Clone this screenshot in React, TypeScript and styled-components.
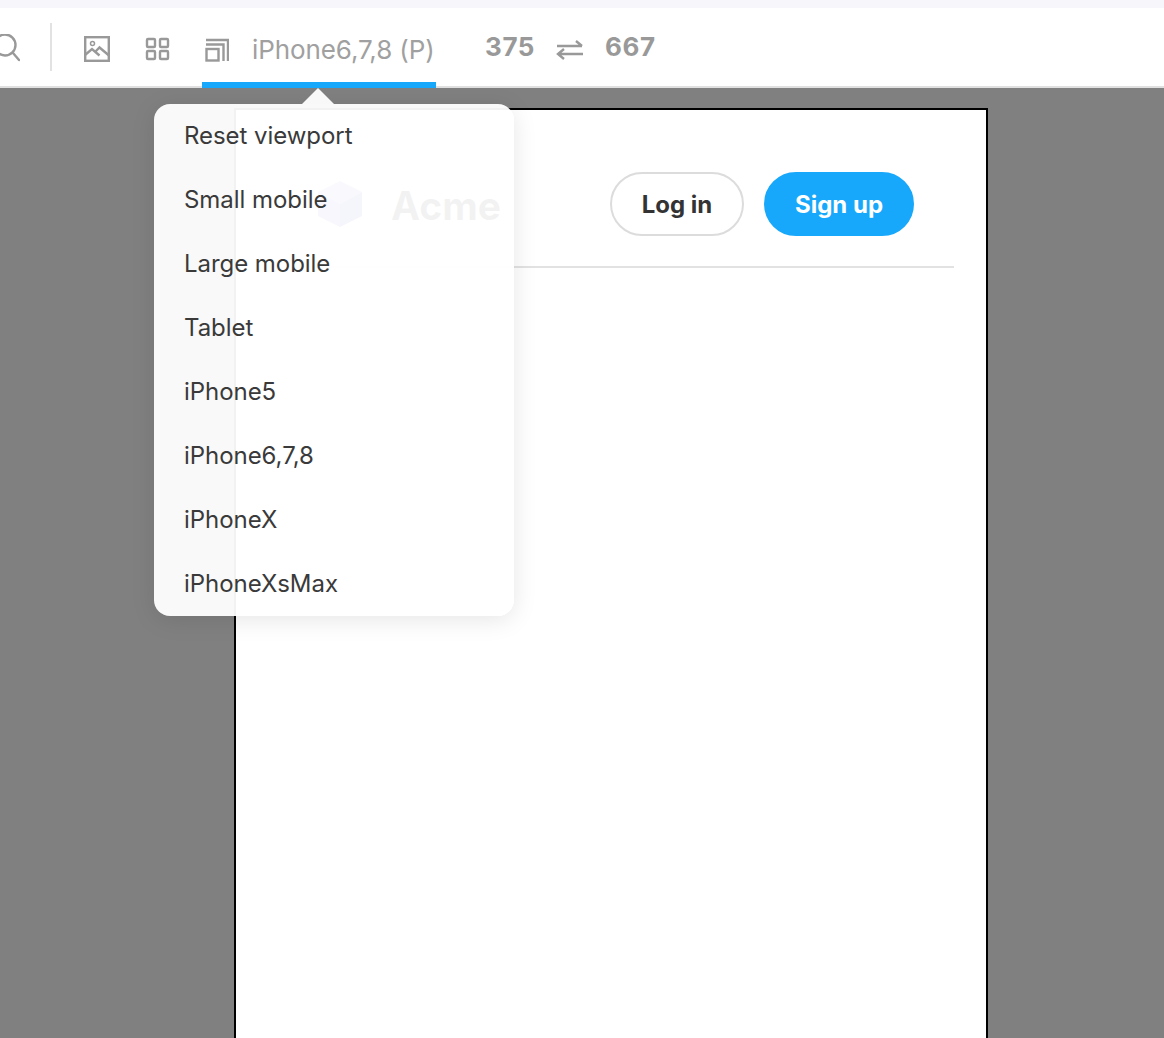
import React from 'react';
import styled, { createGlobalStyle } from 'styled-components';

const Global = createGlobalStyle`
  html, body {
    margin: 0;
    padding: 0;
    height: 100%;
    overflow: hidden;
    background: #808080;
    font-family: Inter, "Liberation Sans", sans-serif;
  }
`;

const Page = styled.div`
  position: relative;
  width: 1164px;
  height: 1038px;
  overflow: hidden;
  display: flex;
  flex-direction: column;
`;

const TopStrip = styled.div`
  height: 8px;
  flex: none;
  background: #f6f6fb;
`;

const Toolbar = styled.header`
  height: 78px;
  flex: none;
  box-sizing: content-box;
  display: flex;
  align-items: center;
  background: #fff;
  border-bottom: 2px solid #e0e0e0;
`;

const SearchIcon = styled.svg`
  width: 28px;
  height: 30px;
  margin: 4px 0 0 -8px;
  flex: none;
`;

const Divider = styled.div`
  width: 2px;
  height: 48px;
  margin: 0 32px 0 30px;
  background: #e2e2e2;
  flex: none;
`;

const ToolIcon = styled.svg<{ $gap: number }>`
  flex: none;
  margin: 4px ${(p) => p.$gap}px 0 0;
`;

const DeviceTab = styled.div`
  align-self: stretch;
  width: 234px;
  box-sizing: border-box;
  display: flex;
  align-items: center;
  gap: 23px;
  padding: 10px 0 0 3px;
  border-bottom: 6px solid #18a8fb;
  margin-bottom: -2px;
  flex: none;
`;

const DeviceName = styled.span`
  font-size: 26px;
  line-height: 30px;
  color: #a0a0a0;
  white-space: nowrap;
  letter-spacing: -0.1px;
`;

const Sizes = styled.div`
  display: flex;
  align-items: center;
  margin-left: 49px;
`;

const SizeValue = styled.span`
  font-size: 26px;
  font-weight: 700;
  line-height: 30px;
  letter-spacing: 0.6px;
  color: #999;
`;

const SwapIcon = styled.svg`
  width: 28px;
  height: 24px;
  margin: 6px 21px 0 21px;
  flex: none;
`;

const Canvas = styled.main`
  flex: 1;
  min-height: 0;
  background: #808080;
  padding: 20px 0 0 234px;
  overflow: hidden;
`;

const Frame = styled.div`
  width: 754px;
  height: 1336px;
  box-sizing: border-box;
  border: 2px solid #000;
  background: #fff;
  padding: 62px 32px 0;
`;

const SiteHeader = styled.div`
  display: flex;
  align-items: flex-start;
  height: 96px;
  box-sizing: border-box;
  padding-left: 50px;
  border-bottom: 2px solid #e2e2e2;
`;

const Brand = styled.div`
  display: flex;
  align-items: center;
  gap: 29px;
  width: 292px;
  height: 64px;
  flex: none;
`;

const BrandName = styled.span`
  font-size: 39px;
  font-weight: 700;
  color: #111;
  padding-top: 3px;
`;

const PillButton = styled.button<{ $primary?: boolean }>`
  height: 64px;
  box-sizing: border-box;
  border-radius: 32px;
  border: 2px solid ${(p) => (p.$primary ? '#18a8fb' : '#dcdcdc')};
  background: ${(p) => (p.$primary ? '#18a8fb' : '#fff')};
  color: ${(p) => (p.$primary ? '#fff' : '#333')};
  font-family: inherit;
  font-size: 24px;
  font-weight: 700;
  padding: 0;
  width: ${(p) => (p.$primary ? 150 : 134)}px;
  margin-right: 20px;
  flex: none;
`;

const Popover = styled.div`
  position: absolute;
  left: 154px;
  top: 104px;
  width: 360px;
  height: 512px;
  border-radius: 16px;
  background: rgba(255, 255, 255, 0.95);
  box-shadow: 0 4px 24px rgba(0, 0, 0, 0.1);

  &::before {
    content: '';
    position: absolute;
    left: 148px;
    top: -16px;
    border-left: 16px solid transparent;
    border-right: 16px solid transparent;
    border-bottom: 16px solid rgba(255, 255, 255, 0.95);
  }
`;

const PopoverItem = styled.div`
  height: 64px;
  padding-left: 30px;
  font-size: 24px;
  line-height: 64px;
  letter-spacing: -0.05px;
  color: #3a3a3a;
`;

const devices = [
  'Reset viewport',
  'Small mobile',
  'Large mobile',
  'Tablet',
  'iPhone5',
  'iPhone6,7,8',
  'iPhoneX',
  'iPhoneXsMax',
];

const stroke = {
  fill: 'none',
  stroke: '#999',
  strokeWidth: 2.4,
} as const;

const App = () => (
  <Page>
    <Global />
    <TopStrip />
    <Toolbar>
      <SearchIcon viewBox="0 0 28 30">
        <circle cx="13" cy="11" r="10.500" fill="none" stroke="#999" strokeWidth="2.4" />
        <path d="M21 19l6 7" fill="none" stroke="#999" strokeWidth="2.4" strokeLinecap="round" />
      </SearchIcon>
      <Divider />
      <ToolIcon $gap={34} width="26" height="26" viewBox="0 0 26 26">
        <rect x="1.200" y="1.200" width="23.600" height="23.600" {...stroke} />
        <circle cx="8.500" cy="7.500" r="2" {...stroke} strokeWidth={1.5} />
        <path d="M1 19l7-6 7.500 6.500M11.500 15.500l4-4 9.500 8" {...stroke} />
      </ToolIcon>
      <ToolIcon $gap={32} width="26" height="26" viewBox="0 0 26 26">
        <rect x="3" y="3" width="8" height="8" rx="1" {...stroke} />
        <rect x="16" y="3" width="8" height="8" rx="1" {...stroke} />
        <rect x="3" y="15" width="8" height="8" rx="1" {...stroke} />
        <rect x="16" y="15" width="8" height="8" rx="1" {...stroke} />
      </ToolIcon>
      <DeviceTab>
        <svg width="24" height="24" viewBox="0 0 24 24" style={{ flex: 'none' }}>
          <path d="M1 2h22v21M1 6.500h17.500V23" {...stroke} />
          <rect x="1.500" y="11" width="12" height="11.500" {...stroke} />
        </svg>
        <DeviceName>iPhone6,7,8 (P)</DeviceName>
      </DeviceTab>
      <Sizes>
        <SizeValue>375</SizeValue>
        <SwapIcon viewBox="0 0 28 24">
          <path d="M1 8h25M20 3l6 5M27 16H2M8 11l-6 5 6 5" {...stroke} />
        </SwapIcon>
        <SizeValue>667</SizeValue>
      </Sizes>
    </Toolbar>
    <Canvas>
      <Frame>
        <SiteHeader>
          <Brand>
            <svg width="44" height="48" viewBox="0 0 44 48" style={{ flex: 'none' }}>
              <path d="M22 1l22 11-22 12z" fill="#3737c3" fillOpacity="0.7" />
              <path d="M44 12v24L22 47V24z" fill="#3737c3" fillOpacity="1" />
              <path d="M22 24v23L0 36V12z" fill="#3737c3" fillOpacity="0.8" />
              <path d="M22 1v23L0 12z" fill="#3737c3" fillOpacity="0.5" />
            </svg>
            <BrandName>Acme</BrandName>
          </Brand>
          <PillButton>Log in</PillButton>
          <PillButton $primary>Sign up</PillButton>
        </SiteHeader>
      </Frame>
    </Canvas>
    <Popover>
      {devices.map((name) => (
        <PopoverItem key={name}>{name}</PopoverItem>
      ))}
    </Popover>
  </Page>
);

export default App;
